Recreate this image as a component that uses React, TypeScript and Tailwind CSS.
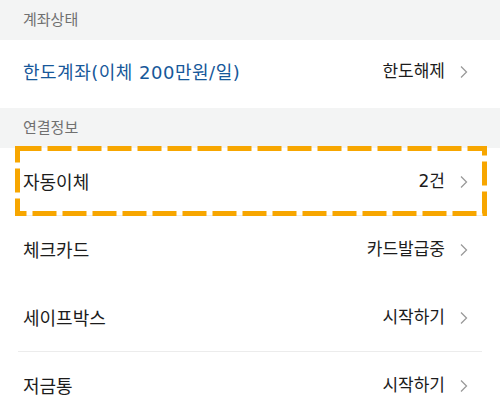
import React from "react";

const FONT = {
  fontFamily: '"DejaVu Sans", "Noto Sans CJK KR", sans-serif',
};

type Row = {
  label: string;
  value: string;
  blue?: boolean;
  divider?: boolean;
};

const Chevron = () => (
  <svg width="8" height="14" viewBox="0 0 8 14" className="ml-[15px] shrink-0">
    <path d="M1 1.5 L6.5 7 L1 12.5" fill="none" stroke="#9a9a9a" strokeWidth="1.3" />
  </svg>
);

const SectionHeader = ({ title, h }: { title: string; h: string }) => (
  <div className={`${h} bg-[#f3f4f4] flex items-center px-[23px]`}>
    <span className="text-[15px] text-[#707070]">{title}</span>
  </div>
);

const ListRow = ({ row, extra = "" }: { row: Row; extra?: string }) => (
  <div className={`relative h-[68px] bg-white flex items-center pl-[23px] pr-[32px] ${extra}`}>
    <span
      className={`flex-1 text-[18px] ${
        row.blue ? "text-[#17589a] tracking-[0.5px]" : "text-[#1c1c1c]"
      }`}
    >
      {row.label}
    </span>
    <span className="text-[17px] text-[#1c1c1c]">{row.value}</span>
    <Chevron />
    {row.divider && (
      <div className="absolute bottom-0 left-[18px] right-[18px] h-px bg-[#ececec]" />
    )}
  </div>
);

export default function App() {
  const linked: Row[] = [
    { label: "자동이체", value: "2건", divider: true },
    { label: "체크카드", value: "카드발급중" },
    { label: "세이프박스", value: "시작하기", divider: true },
    { label: "저금통", value: "시작하기" },
  ];

  return (
    <div className="relative w-[500px] h-[418px] overflow-hidden bg-white" style={FONT}>
      <SectionHeader title="계좌상태" h="h-[40px]" />
      <ListRow
        row={{ label: "한도계좌(이체 200만원/일)", value: "한도해제", blue: true }}
        extra="pb-[4px]"
      />
      <SectionHeader title="연결정보" h="h-[40px]" />
      {linked.map((r) => (
        <ListRow key={r.label} row={r} />
      ))}

      {/* 강조 표시 점선 박스 */}
      <svg
        className="absolute left-0 top-0 pointer-events-none"
        width="500"
        height="418"
      >
        <rect
          x="17.5"
          y="148.5"
          width="467"
          height="65"
          fill="none"
          stroke="#f7a600"
          strokeWidth="5"
          strokeDasharray="24 6"
        />
      </svg>
    </div>
  );
}
